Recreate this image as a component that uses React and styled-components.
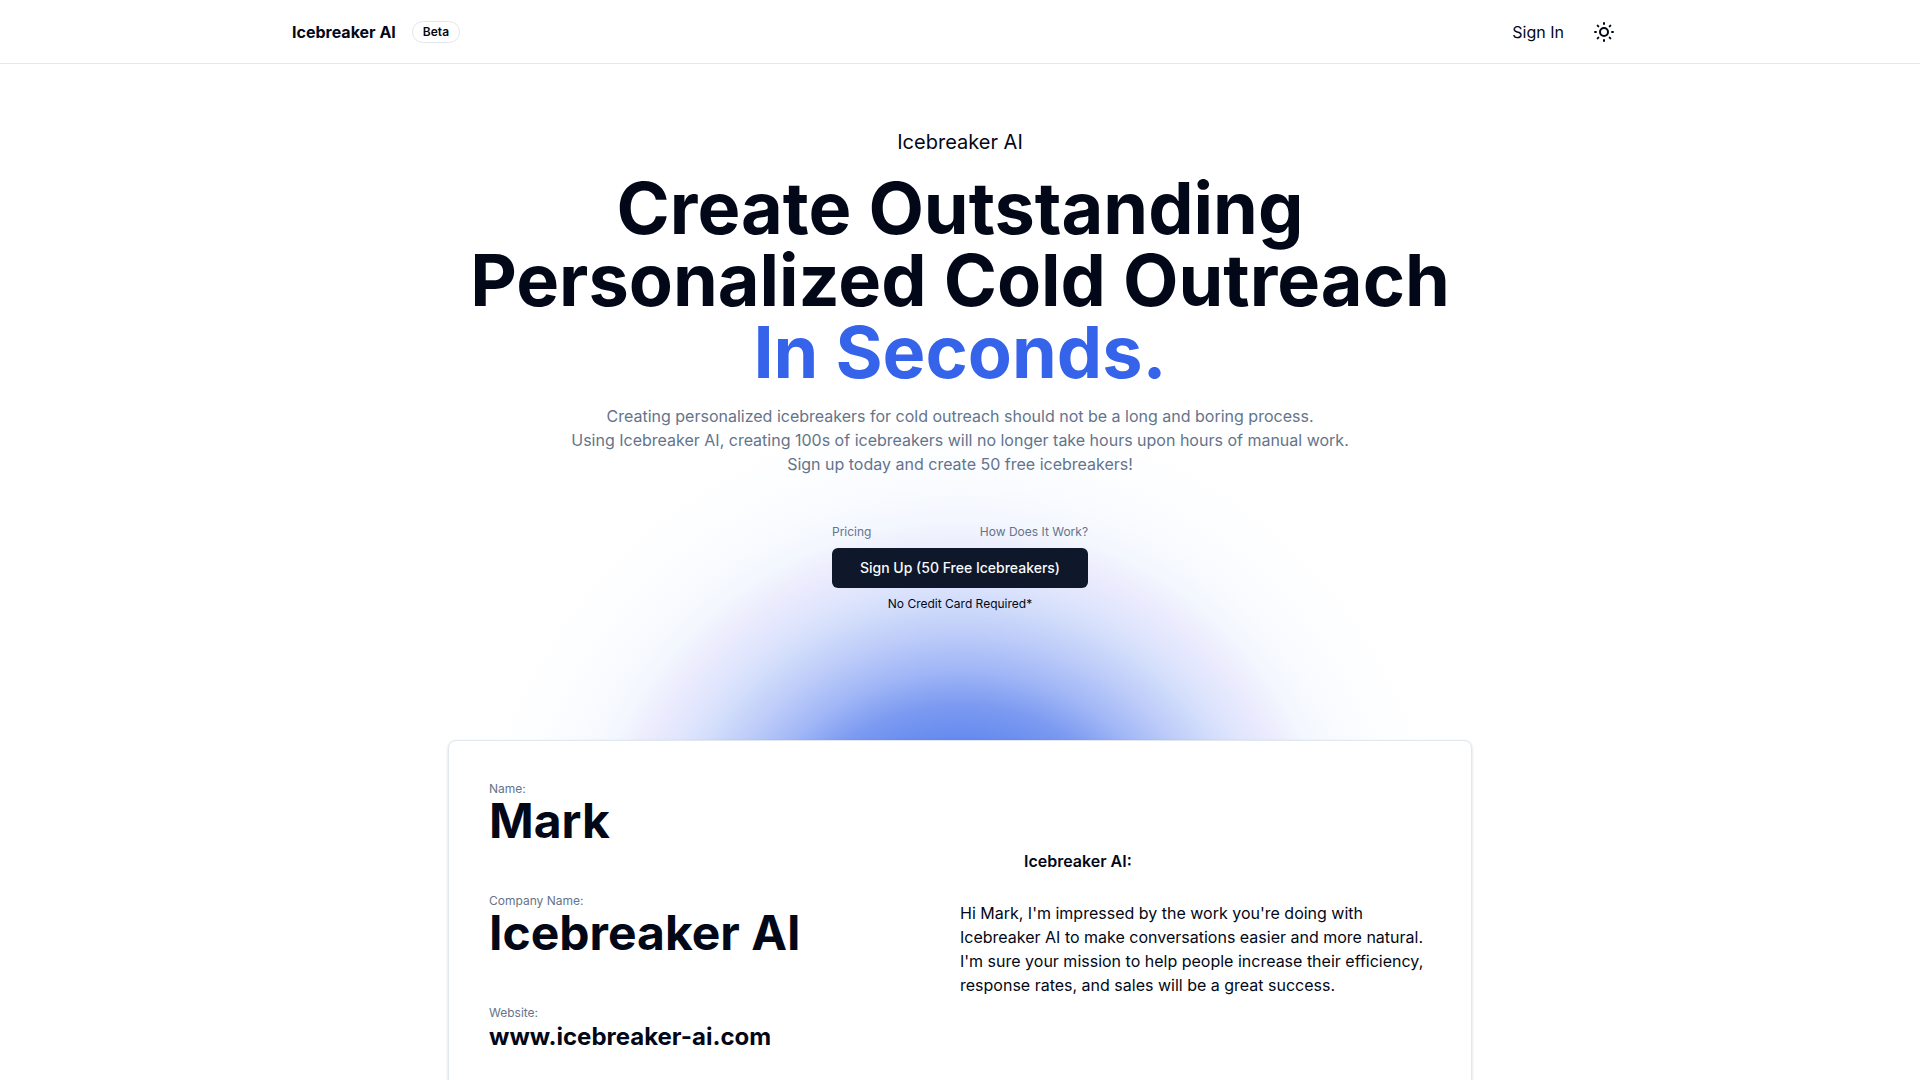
import React from "react";
import styled, { createGlobalStyle } from "styled-components";
import { SunMedium } from "lucide-react";

const ink = "#020817";
const muted = "#64748b";
const line = "#e2e8f0";

const GlobalStyle = createGlobalStyle`
  *, *::before, *::after { box-sizing: border-box; }
  body {
    margin: 0;
    background: #fff;
    color: ${ink};
    font-family: Inter, "Liberation Sans", sans-serif;
    font-size: 16px;
    line-height: 24px;
  }
  h1, h2, p, dl, dt, dd { margin: 0; }
  a { color: inherit; text-decoration: none; }
`;

const Header = styled.header`
  border-bottom: 1px solid ${line};
`;

const HeaderInner = styled.div`
  display: flex;
  align-items: center;
  justify-content: space-between;
  max-width: 1400px;
  height: 63px;
  margin: 0 auto;
  padding: 0 32px;
`;

const Group = styled.div`
  display: flex;
  align-items: center;
  gap: 16px;
`;

const Brand = styled.a`
  font-weight: 700;
`;

const Badge = styled.span`
  padding: 2px 10px;
  border: 1px solid ${line};
  border-radius: 999px;
  font-size: 12px;
  line-height: 16px;
  font-weight: 600;
`;

const IconButton = styled.button`
  display: flex;
  padding: 8px 12px;
  border: 0;
  border-radius: 6px;
  background: transparent;
  color: inherit;
  cursor: pointer;
`;

const Page = styled.main`
  max-width: 1088px;
  margin: 0 auto;
  padding: 64px 32px;
`;

const Hero = styled.section`
  display: flex;
  flex-direction: column;
  align-items: center;
  padding-bottom: 128px;
  text-align: center;
  background: radial-gradient(
    circle 500px at 50% calc(100% + 160px),
    #4f79ec 0%,
    #658aef 32%,
    #7c9af1 39%,
    #a0b6f6 46%,
    #bccbf9 53%,
    #d3defb 60%,
    #e1e6fd 65%,
    #ebebfd 70%,
    #f3f7fe 76%,
    #f9fbff 83%,
    #fdfeff 91%,
    #ffffff 100%
  );
`;

const Eyebrow = styled.p`
  font-size: 20px;
  line-height: 28px;
`;

const Title = styled.h1`
  margin-top: 16px;
  font-size: 72px;
  line-height: 72px;
  font-weight: 700;
`;

const Accent = styled.span`
  display: block;
  color: #3564eb;
`;

const Lead = styled.p`
  margin-top: 16px;
  color: ${muted};
`;

const Actions = styled.div`
  display: flex;
  flex-direction: column;
  gap: 8px;
  margin-top: 48px;
  font-size: 12px;
  line-height: 16px;
`;

const Links = styled.nav`
  display: flex;
  justify-content: space-between;
  color: ${muted};
`;

const SignUp = styled.button`
  height: 40px;
  padding: 0 28px;
  border: 0;
  border-radius: 6px;
  background: #0f172a;
  color: #f8fafc;
  font: 500 14px/20px Inter, "Liberation Sans", sans-serif;
  cursor: pointer;
`;

const Card = styled.section`
  display: grid;
  grid-template-columns: 1fr 1fr;
  align-items: center;
  padding: 40px;
  border: 1px solid ${line};
  border-radius: 8px;
  background: #fff;
  box-shadow: 0 1px 3px rgba(0, 0, 0, 0.1), 0 1px 2px rgba(0, 0, 0, 0.1);
`;

const Fields = styled.dl`
  display: flex;
  flex-direction: column;
  gap: 48px;
  padding-bottom: 12px;
`;

const Label = styled.dt`
  color: ${muted};
  font-size: 12px;
  line-height: 16px;
`;

const Value = styled.dd`
  font-size: ${(p) => (p.$small ? "24px" : "48px")};
  line-height: ${(p) => (p.$small ? "32px" : "48px")};
  font-weight: 700;
`;

const Message = styled.div`
  display: flex;
  flex-direction: column;
  gap: 28px;
`;

const MessageTitle = styled.h2`
  padding: 0 64px;
  font-size: 16px;
  line-height: 24px;
  font-weight: 600;
`;

const fields = [
  { label: "Name:", value: "Mark" },
  { label: "Company Name:", value: "Icebreaker AI" },
  { label: "Website:", value: "www.icebreaker-ai.com", small: true },
];

export default function App() {
  return (
    <>
      <GlobalStyle />
      <Header>
        <HeaderInner>
          <Group>
            <Brand href="#">Icebreaker AI</Brand>
            <Badge>Beta</Badge>
          </Group>
          <Group>
            <a href="#signin">Sign In</a>
            <IconButton type="button" aria-label="Toggle theme">
              <SunMedium size={24} />
            </IconButton>
          </Group>
        </HeaderInner>
      </Header>
      <Page>
        <Hero>
          <Eyebrow>Icebreaker AI</Eyebrow>
          <Title>
            Create Outstanding Personalized Cold Outreach
            <Accent>In Seconds.</Accent>
          </Title>
          <Lead>
            Creating personalized icebreakers for cold outreach should not be a long and boring process.
            <br />
            Using Icebreaker AI, creating 100s of icebreakers will no longer take hours upon hours of manual work.
            <br />
            Sign up today and create 50 free icebreakers!
          </Lead>
          <Actions>
            <Links>
              <a href="#pricing">Pricing</a>
              <a href="#how">How Does It Work?</a>
            </Links>
            <SignUp type="button">Sign Up (50 Free Icebreakers)</SignUp>
            <p>No Credit Card Required*</p>
          </Actions>
        </Hero>
        <Card>
          <Fields>
            {fields.map((f) => (
              <div key={f.label}>
                <Label>{f.label}</Label>
                <Value $small={f.small}>{f.value}</Value>
              </div>
            ))}
          </Fields>
          <Message>
            <MessageTitle>Icebreaker AI:</MessageTitle>
            <p>
              Hi Mark, I'm impressed by the work you're doing with Icebreaker AI to make conversations easier and more
              natural. I'm sure your mission to help people increase their efficiency, response rates, and sales will be
              a great success.
            </p>
          </Message>
        </Card>
      </Page>
    </>
  );
}
